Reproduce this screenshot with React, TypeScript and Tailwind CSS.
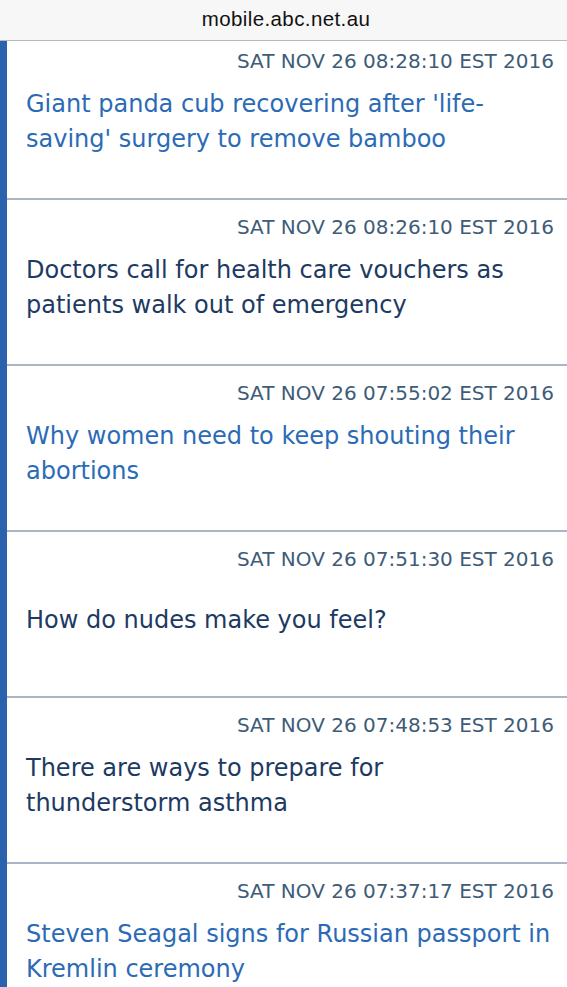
const stories = [
  { time: 'SAT NOV 26 08:28:10 EST 2016', title: "Giant panda cub recovering after 'life-saving' surgery to remove bamboo", visited: false },
  { time: 'SAT NOV 26 08:26:10 EST 2016', title: 'Doctors call for health care vouchers as patients walk out of emergency', visited: true },
  { time: 'SAT NOV 26 07:55:02 EST 2016', title: 'Why women need to keep shouting their abortions', visited: false },
  { time: 'SAT NOV 26 07:51:30 EST 2016', title: 'How do nudes make you feel?', visited: true },
  { time: 'SAT NOV 26 07:48:53 EST 2016', title: 'There are ways to prepare for thunderstorm asthma', visited: true },
  { time: 'SAT NOV 26 07:37:17 EST 2016', title: 'Steven Seagal signs for Russian passport in Kremlin ceremony', visited: false },
];

export default function App() {
  return (
    <div className="h-[987px] overflow-hidden bg-white" style={{ fontFamily: '"DejaVu Sans", Verdana, sans-serif' }}>
      <div
        className="relative z-10 flex h-[41px] items-center justify-center border-b border-[#b9b9b9] bg-[#f7f7f7] pb-[1px] pl-[5px] text-[20.5px] tracking-[0.4px] text-[#111]"
        style={{ fontFamily: '"Liberation Sans", Arial, sans-serif' }}
      >
        mobile.abc.net.au
      </div>
      <div className="-mt-[7px] border-l-[7px] border-[#2a62ae]">
        {stories.map((s) => (
          <a key={s.time} href="#" className="block h-[166px] border-b-2 border-[#aab5c6] pl-[19px] pr-[13px] pt-[15px]">
            <div className="text-right text-[20px] leading-[24px] text-[#3e5c78]">{s.time}</div>
            <div className="mr-[2px] mt-[14px] flex h-[70px] items-center">
              <h2
                className={
                  'text-[24px] leading-[35px] font-normal ' +
                  (s.visited ? 'text-[#1d3a62]' : 'text-[#2b6bb6]')
                }
              >
                {s.title}
              </h2>
            </div>
          </a>
        ))}
      </div>
    </div>
  );
}
